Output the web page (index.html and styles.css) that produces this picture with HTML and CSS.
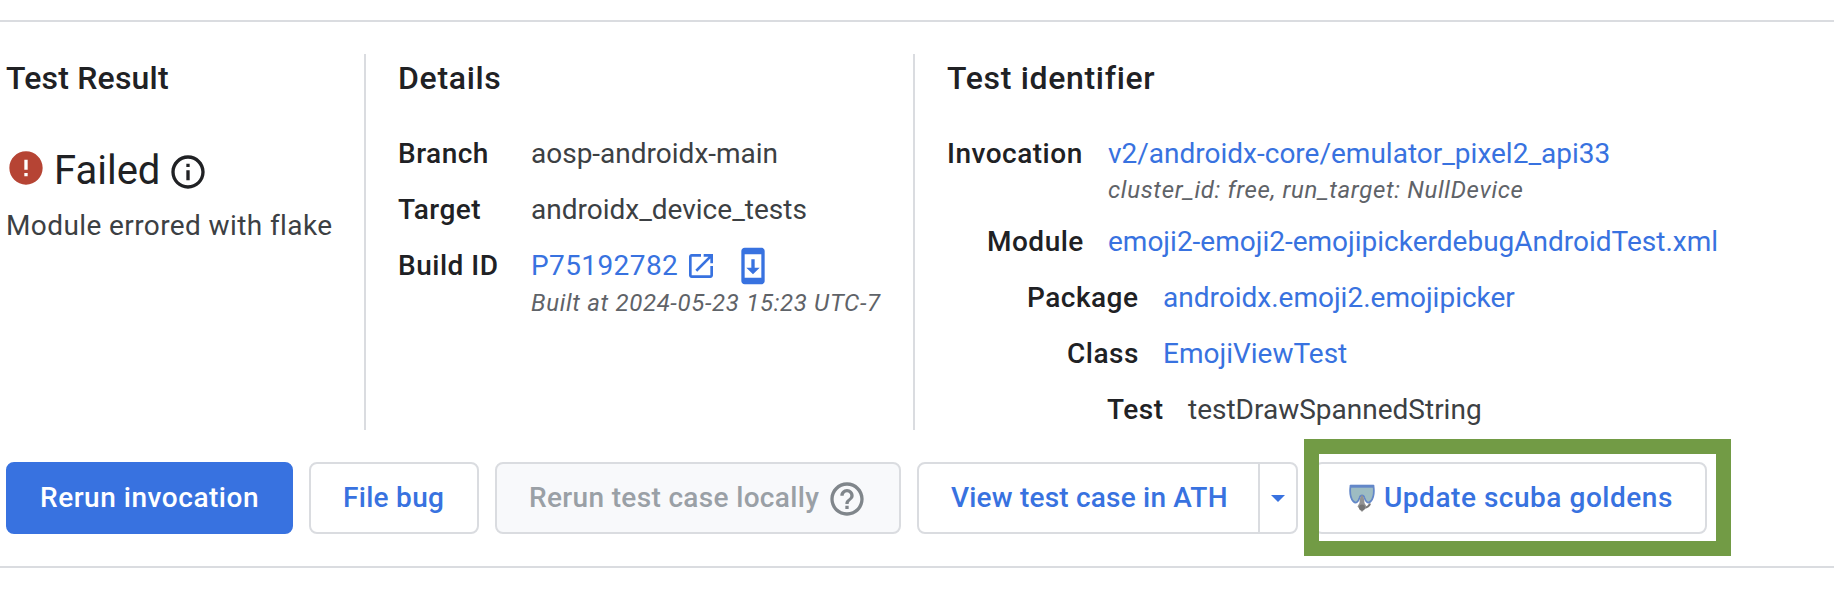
FILE: index.html
```html
<!DOCTYPE html>
<html lang="en">
<head>
<meta charset="utf-8">
<title>Test Result</title>
<link rel="stylesheet" href="styles.css">
</head>
<body>
<main class="panel">
  <div class="columns">
    <section class="col result">
      <h2 class="heading h-result">Test Result</h2>
      <div class="status">
        <svg class="icon40 error" viewBox="0 0 24 24"><path fill="currentColor" d="M12 2C6.48 2 2 6.48 2 12s4.480 10 10 10 10-4.480 10-10S17.520 2 12 2zm1 15h-2v-2h2v2zm0-4h-2V7h2v6z"/></svg>
        <span class="status-text">Failed</span>
        <svg class="icon40 info" viewBox="0 0 24 24"><path fill="currentColor" d="M11 7h2v2h-2zm0 4h2v6h-2zm1-9C6.480 2 2 6.480 2 12s4.480 10 10 10 10-4.480 10-10S17.520 2 12 2zm0 18c-4.410 0-8-3.590-8-8s3.590-8 8-8 8 3.590 8 8-3.590 8-8 8z"/></svg>
      </div>
      <p class="reason">Module errored with flake</p>
    </section>
    <section class="col details">
      <h2 class="heading h-details">Details</h2>
      <dl class="rows">
        <div class="row"><dt class="l-branch">Branch</dt><dd class="v-branch">aosp-androidx-main</dd></div>
        <div class="row"><dt class="l-target">Target</dt><dd class="v-target">androidx_device_tests</dd></div>
        <div class="row">
          <dt class="l-build">Build ID</dt>
          <dd>
            <div class="build"><a class="v-build">P75192782</a>
              <svg class="icon-open" viewBox="0 0 24 24"><path fill="currentColor" d="M19 19H5V5h7V3H5c-1.110 0-2 .9-2 2v14c0 1.100.890 2 2 2h14c1.100 0 2-.9 2-2v-7h-2v7zM14 3v2h3.590l-9.830 9.830 1.410 1.410L19 6.410V10h2V3h-7z"/></svg>
              <svg class="icon-phone" viewBox="0 0 24 24"><path fill="currentColor" d="M17 1.010 7 1c-1.100 0-2 .9-2 2v18c0 1.100.9 2 2 2h10c1.100 0 2-.9 2-2V3c0-1.100-.9-1.990-2-1.990zM17 19H7V5h10v14zm-1-6h-3V8h-2v5H8l4 4 4-4z"/></svg>
            </div>
            <div class="note n-built">Built at 2024-05-23 15:23 UTC-7</div>
          </dd>
        </div>
      </dl>
    </section>
    <section class="col identifier">
      <h2 class="heading h-ident">Test identifier</h2>
      <dl class="rows">
        <div class="row lvl0"><dt class="l-inv">Invocation</dt><dd><a class="v-inv">v2/androidx-core/emulator_pixel2_api33</a><div class="note n-cluster">cluster_id: free, run_target: NullDevice</div></dd></div>
        <div class="row lvl1"><dt class="l-mod">Module</dt><dd><a class="v-mod">emoji2-emoji2-emojipickerdebugAndroidTest.xml</a></dd></div>
        <div class="row lvl2"><dt class="l-pkg">Package</dt><dd><a class="v-pkg">androidx.emoji2.emojipicker</a></dd></div>
        <div class="row lvl3"><dt class="l-cls">Class</dt><dd><a class="v-cls">EmojiViewTest</a></dd></div>
        <div class="row lvl4"><dt class="l-test">Test</dt><dd class="v-test">testDrawSpannedString</dd></div>
      </dl>
    </section>
  </div>
  <div class="actions">
    <button class="btn primary"><span class="t-rerun">Rerun invocation</span></button>
    <button class="btn file"><span class="t-file">File bug</span></button>
    <button class="btn disabled"><span class="t-local">Rerun test case locally</span>
      <svg class="icon40 help" viewBox="0 0 24 24"><path fill="currentColor" d="M11 18h2v-2h-2v2zm1-16C6.480 2 2 6.480 2 12s4.480 10 10 10 10-4.480 10-10S17.520 2 12 2zm0 18c-4.410 0-8-3.590-8-8s3.590-8 8-8 8 3.590 8 8-3.590 8-8 8zm0-14c-2.210 0-4 1.790-4 4h2c0-1.100.9-2 2-2s2 .9 2 2c0 2-3 1.750-3 5h2c0-2.250 3-2.500 3-5 0-2.210-1.790-4-4-4z"/></svg>
    </button>
    <div class="split">
      <button class="btn view"><span class="t-view">View test case in ATH</span></button>
      <button class="btn caret"><svg class="caret-icon" viewBox="0 0 14 7"><path fill="currentColor" d="M0 0h14L7 7z"/></svg></button>
    </div>
    <div class="target">
      <button class="btn update">
        <svg class="mask" viewBox="0 0 26 28"><path d="M1.500 2h23c.8 6 0 12-2.500 15-3 3-5 1.500-6.500-3-1-3.500-4-3.500-5 0-1.500 4.500-3.500 6-6.500 3C1.500 14 .700 8 1.500 2z" fill="#9dbcc2" stroke="#6387c8" stroke-width="1.800"/><path d="M1.200 2.200h23.600" stroke="#6387c8" stroke-width="3"/><path d="M21 19.500c-1 3-3 4-6 4.500" fill="none" stroke="#777" stroke-width="2.200"/><path d="M13 11c2 1.500 2.300 5 2.500 8l2 3.500-2 2.500-2.500 3-2.500-3-2-2.500 2-3.500c.2-3 .5-6.500 2.500-8z" fill="#929292"/><circle cx="13" cy="23.500" r="3" fill="#747474"/></svg>
        <span class="t-update">Update scuba goldens</span>
      </button>
      <span class="highlight"></span>
    </div>
  </div>
</main>
</body>
</html>
```
FILE: styles.css
```css
* { box-sizing: border-box; }
body { margin: 0; background: #fff; font-family: Roboto, sans-serif; font-size: 28px; line-height: 32px; color: #3c4043; overflow: hidden; }
h2, p, dl, dt, dd { margin: 0; }
.panel { margin-top: 20px; height: 548px; border-top: 2px solid #dadce0; border-bottom: 2px solid #dadce0; padding: 32px 0 0 6px; white-space: nowrap; }
.columns { display: flex; height: 376px; }
.col { padding-top: 4px; }
.result { width: 358px; }
.details { width: 549px; padding-left: 32px; border-left: 2px solid #dadce0; }
.identifier { flex: 1; padding-left: 32px; border-left: 2px solid #dadce0; }
.heading { font-weight: 500; font-size: 32px; line-height: 40px; letter-spacing: .68px; color: #202124; font-variant-ligatures: none; }
.h-result { letter-spacing: .2px; }
.rows { padding-top: 40px; display: flex; flex-direction: column; gap: 24px; }
.row { display: flex; }
dt { font-weight: 500; color: #202124; letter-spacing: .5px; }
a { color: #3872e0; display: block; }
.details dt { width: 133px; }
.note { font-size: 24px; font-style: italic; color: #5f6368; letter-spacing: .67px; }
.status { display: flex; height: 48px; margin-top: 42px; }
.status-text { font-size: 40px; line-height: 48px; color: #202124; width: 114px; margin: 7px 0 0 8px; }
.icon40 { width: 40px; height: 40px; flex: none; }
.error { color: #b64434; margin-top: 8px; }
.info { color: #202124; margin-top: 12px; }
.reason { margin-top: 22px; letter-spacing: .4px; }
.build { display: flex; height: 32px; align-items: center; }
.v-build { width: 154px; letter-spacing: .4px; }
.icon-open { width: 32px; height: 32px; color: #3872e0; }
.icon-phone { width: 40px; height: 40px; margin-left: 16px; color: #3872e0; }
.n-built { margin-top: 5px; }
.n-cluster { margin-top: 4px; }
.identifier .rows { gap: 0; }
.lvl0 { height: 88px; }
.lvl1, .lvl2, .lvl3 { height: 56px; }
.lvl0 dt { width: 161px; }
.lvl1 { padding-left: 40px; } .lvl1 dt { width: 121px; }
.lvl2 { padding-left: 80px; } .lvl2 dt { width: 136px; }
.lvl3 { padding-left: 120px; } .lvl3 dt { width: 96px; }
.lvl4 { padding-left: 160px; } .lvl4 dt { width: 81px; }
.actions { display: flex; gap: 16px; margin-top: 32px; height: 72px; }
.btn { height: 72px; margin: 0; padding: 0 0 0 32px; border: 2px solid #dadce0; border-radius: 8px; background: #fff; color: #3872e0; font: 500 28px/32px Roboto, sans-serif; display: flex; align-items: center; white-space: nowrap; }
.primary { width: 287px; background: #3872e0; border-color: #3872e0; color: #fff; }
.t-rerun { letter-spacing: .53px; }
.file { width: 170px; }
.t-file { letter-spacing: .29px; }
.disabled { width: 406px; background: #f8f9fb; color: #9aa0a6; }
.t-local { width: 298px; text-align: left; letter-spacing: .34px; }
.help { color: #80868b; margin-top: 2px; }
.split { display: flex; width: 381px; }
.view { width: 343px; border-radius: 8px 0 0 8px; }
.t-view { letter-spacing: .2px; }
.caret { width: 40px; margin-left: -2px; padding: 0 0 0 11px; border-radius: 0 8px 8px 0; }
.caret-icon { width: 14px; height: 7px; }
.target { position: relative; }
.update { width: 393px; padding-left: 33px; }
.t-update { letter-spacing: .53px; }
.mask { width: 26px; height: 28px; margin-right: 9px; }
.highlight { position: absolute; left: -10px; top: -23px; width: 427px; height: 117px; border: 15px solid #729b45; }
```
